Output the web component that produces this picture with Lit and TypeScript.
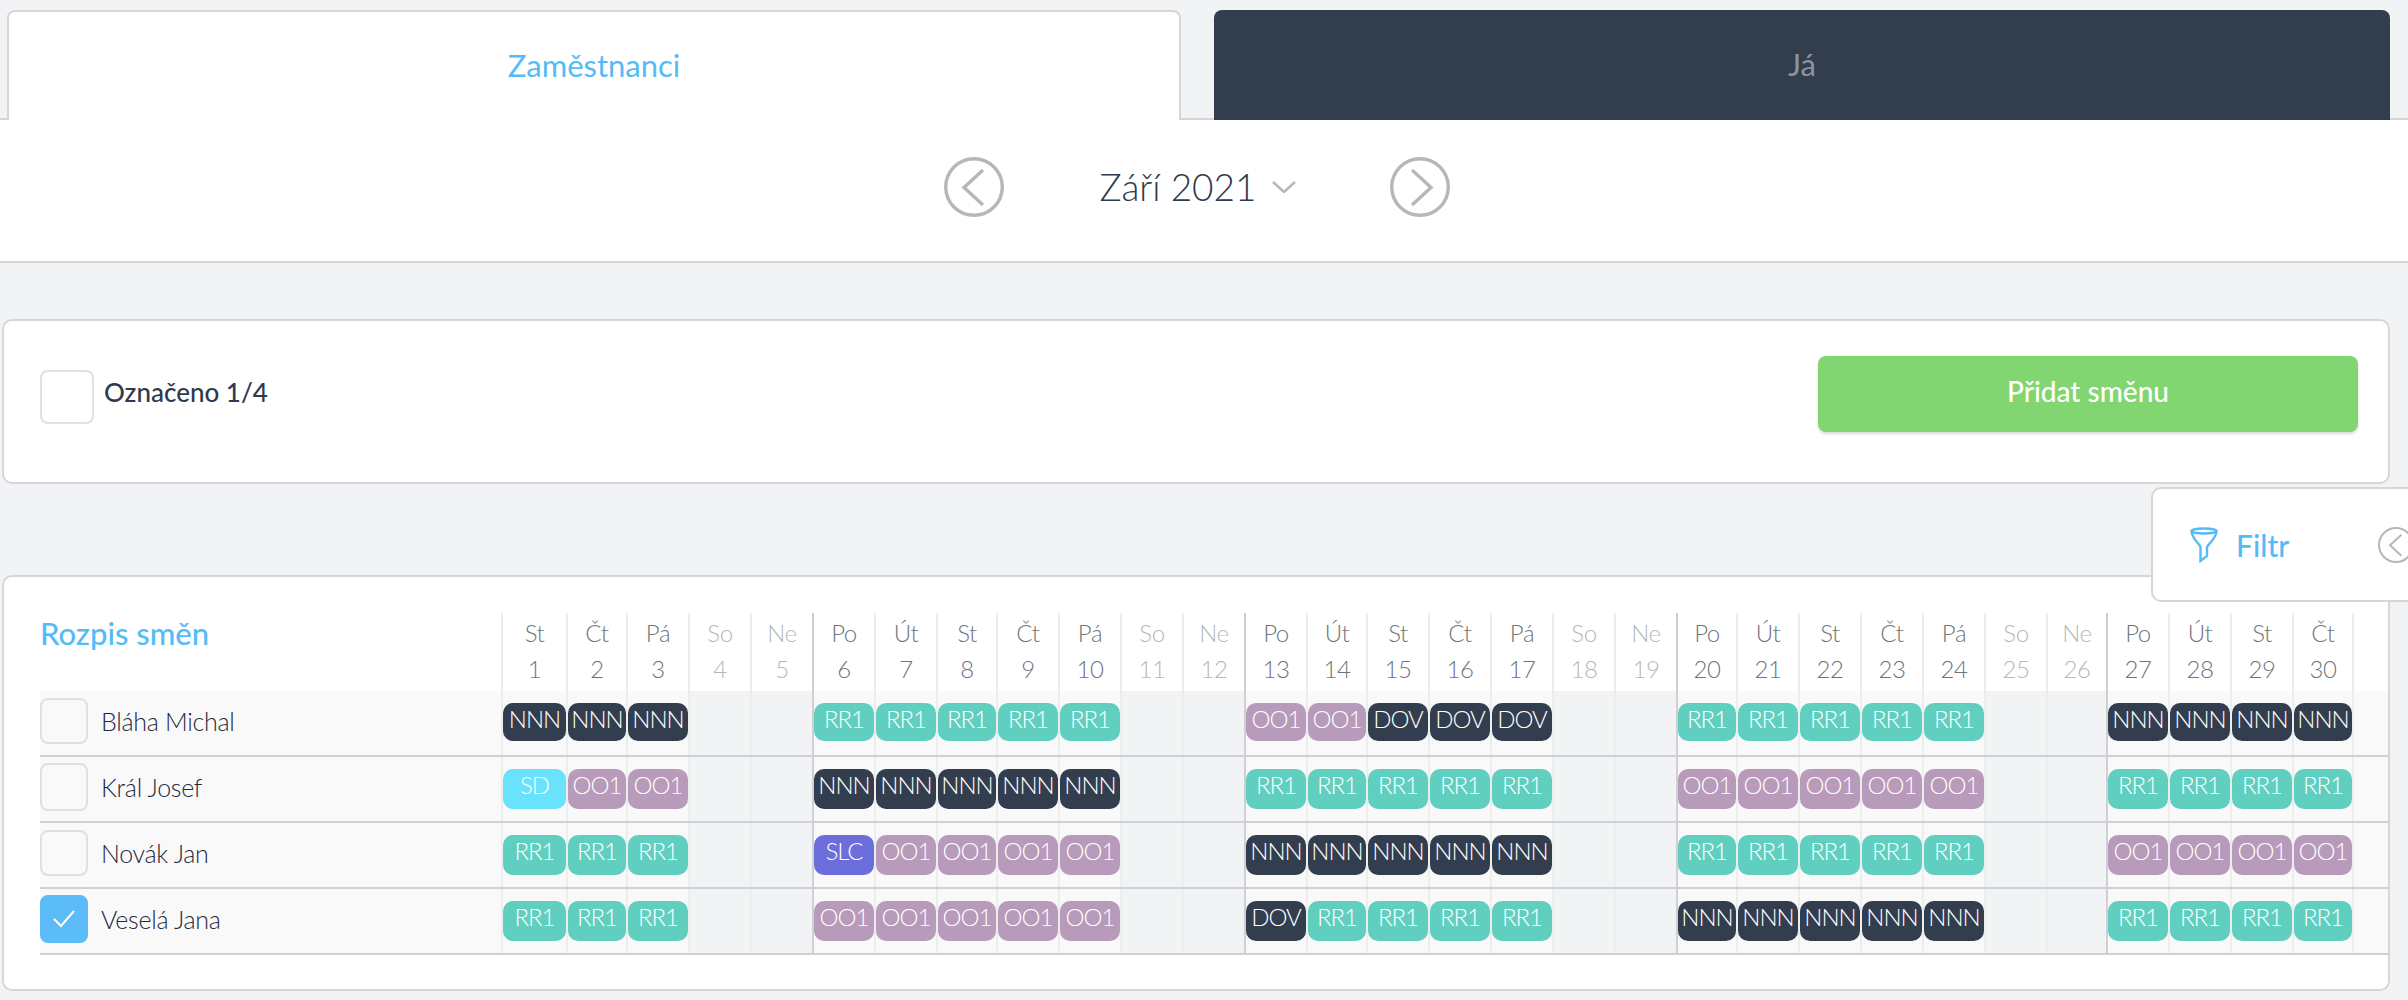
import { LitElement, css, html, svg } from 'lit';
import { customElement } from 'lit/decorators.js';

const days = ['St', 'Čt', 'Pá', 'So', 'Ne', 'Po', 'Út'];

// day columns are not equal in the original table, widths come from content
const colWidths = [65, 60, 62, 62, 62, 62, 62, 60, 62, 62, 62, 62, 62, 60, 62, 62, 62, 62, 62, 60, 62, 62, 62, 62, 62, 60, 62, 62, 62, 62];

type Shift = { from: number; to: number; code: string };

const employees: { name: string; checked?: boolean; shifts: Shift[] }[] = [
    {
        name: 'Bláha Michal',
        shifts: [
            { from: 1, to: 3, code: 'NNN' },
            { from: 6, to: 10, code: 'RR1' },
            { from: 13, to: 14, code: 'OO1' },
            { from: 15, to: 17, code: 'DOV' },
            { from: 20, to: 24, code: 'RR1' },
            { from: 27, to: 30, code: 'NNN' },
        ],
    },
    {
        name: 'Král Josef',
        shifts: [
            { from: 1, to: 1, code: 'SD' },
            { from: 2, to: 3, code: 'OO1' },
            { from: 6, to: 10, code: 'NNN' },
            { from: 13, to: 17, code: 'RR1' },
            { from: 20, to: 24, code: 'OO1' },
            { from: 27, to: 30, code: 'RR1' },
        ],
    },
    {
        name: 'Novák Jan',
        shifts: [
            { from: 1, to: 3, code: 'RR1' },
            { from: 6, to: 6, code: 'SLC' },
            { from: 7, to: 10, code: 'OO1' },
            { from: 13, to: 17, code: 'NNN' },
            { from: 20, to: 24, code: 'RR1' },
            { from: 27, to: 30, code: 'OO1' },
        ],
    },
    {
        name: 'Veselá Jana',
        checked: true,
        shifts: [
            { from: 1, to: 3, code: 'RR1' },
            { from: 6, to: 10, code: 'OO1' },
            { from: 13, to: 13, code: 'DOV' },
            { from: 14, to: 17, code: 'RR1' },
            { from: 20, to: 24, code: 'NNN' },
            { from: 27, to: 30, code: 'RR1' },
        ],
    },
];

const dayList = Array.from({ length: 30 }, (_, i) => i + 1);
const dayName = (d: number) => days[(d - 1) % 7];
const isWeekend = (d: number) => ['So', 'Ne'].includes(dayName(d));
const isMonday = (d: number) => dayName(d) === 'Po';

const arrow = (dir: 'left' | 'right', size = 60) => html`
    <svg class="arrow" width=${size} height=${size} viewBox="0 0 60 60">
        <circle cx="30" cy="30" r="28.300" fill="none" stroke="#b4b8bd" stroke-width="3.400"></circle>
        ${dir === 'left'
            ? svg`<path d="M39 13 L20 30.500 L39 48" fill="none" stroke="#b4b8bd" stroke-width="3.400"></path>`
            : svg`<path d="M22 13 L41 30.500 L22 48" fill="none" stroke="#b4b8bd" stroke-width="3.400"></path>`}
    </svg>
`;

@customElement('app-root')
export class AppRoot extends LitElement {
    static styles = css`
        :host {
            display: block;
            position: relative;
            overflow: hidden;
            min-height: 1000px;
            background: #f2f3f5;
            font-family: 'Lato', sans-serif;
            color: #2f3a4c;
        }

        .tabs {
            display: flex;
            gap: 33px;
            height: 120px;
            padding: 10px 18px 0 7px;
            box-sizing: border-box;
            box-shadow: inset 0 -2px 0 #d5d6da;
        }

        .tab {
            box-sizing: border-box;
            display: flex;
            align-items: center;
            justify-content: center;
            padding-bottom: 3px;
            border-radius: 8px 8px 0 0;
            font-size: 31px;
        }

        .tab.active {
            width: 1174px;
            background: #fff;
            color: #55bbf8;
            border: 2px solid #d5d6da;
            border-bottom: 0;
        }

        .tab.dark {
            flex: 1;
            background: #323d4e;
            color: #8e949d;
        }

        .month {
            display: flex;
            align-items: center;
            justify-content: center;
            height: 143px;
            box-sizing: border-box;
            padding: 0 15px 8px 0;
            background: #fff;
            border-bottom: 2px solid #d5d6da;
        }

        .month-label {
            display: flex;
            align-items: center;
            gap: 15px;
            margin: 0 94px 0 96px;
            font-size: 37px;
            font-weight: 300;
        }

        .card {
            background: #fff;
            border: 2px solid #d5d6da;
            border-radius: 10px;
            margin: 0 18px 0 2px;
            box-sizing: border-box;
        }

        .toolbar {
            display: flex;
            align-items: flex-start;
            height: 165px;
            margin-top: 56px;
            padding: 35px 30px 0 36px;
        }

        .box {
            box-sizing: border-box;
            border: 2px solid #dfe0e3;
            border-radius: 8px;
            width: 48px;
            height: 46px;
            flex: none;
        }

        .box.tall {
            height: 48px;
        }

        .toolbar .box {
            width: 54px;
            height: 54px;
            margin-top: 14px;
        }

        .count {
            margin: 20px 0 0 10px;
            font-size: 26px;
            font-weight: 500;
        }

        .add {
            margin-left: auto;
            width: 540px;
            height: 76px;
            border: 0;
            border-radius: 8px;
            background: #82d672;
            color: #fff;
            font: 500 28px 'Lato', sans-serif;
            padding-bottom: 7px;
            box-shadow: 0 2px 3px rgba(0, 0, 0, 0.15);
        }

        .schedule {
            height: 416px;
            margin-top: 91px;
            padding: 36px 0 0 36px;
        }

        .line {
            display: flex;
        }

        .line-head {
            width: 461px;
            flex: none;
        }

        .title {
            font-size: 31px;
            font-weight: 500;
            color: #55bbf8;
            margin-top: 1px;
        }

        .cell {
            box-sizing: border-box;
            flex: none;
            border-left: 2px solid #eceded;
        }

        .cell.monday {
            border-left-color: #cfd0d4;
        }

        .cell.last {
            border-right: 2px solid #eceded;
        }

        .head-cell {
            height: 78px;
            text-align: center;
            font-size: 24px;
            font-weight: 300;
            letter-spacing: -0.4px;
            color: #6f747b;
            line-height: 36px;
            padding-top: 2px;
        }

        .head-cell.weekend {
            color: #b4b7bb;
        }

        .row {
            height: 66px;
            background: #f9f9fa;
            border-bottom: 2px solid #cfd0d4;
            box-sizing: border-box;
        }

        .person {
            display: flex;
            align-items: center;
            gap: 13px;
            padding-bottom: 4px;
            box-sizing: border-box;
            font-size: 25px;
            font-weight: 300;
            letter-spacing: -0.3px;
            color: #1f2a3c;
        }

        .box.checked {
            background: #5bbcf8;
            border-color: #5bbcf8;
            display: flex;
            align-items: center;
            justify-content: center;
        }

        .day {
            padding-top: 12px;
        }

        .day.weekend {
            background: #f2f3f5;
        }

        .badge {
            height: 40px;
            border-radius: 10px;
            color: #fff;
            text-align: center;
            font-size: 24px;
            font-weight: 300;
            letter-spacing: -1px;
            line-height: 32px;
        }

        .row.first .badge {
            height: 38px;
        }

        .NNN,
        .DOV {
            background: #323d4e;
        }
        .RR1 {
            background: #60cfc0;
        }
        .OO1 {
            background: #b89aba;
        }
        .SD {
            background: #69e2fb;
        }
        .SLC {
            background: #6c6edc;
        }

        .filter {
            position: absolute;
            left: 2151px;
            top: 487px;
            width: 300px;
            height: 115px;
            box-sizing: border-box;
            display: flex;
            align-items: center;
            padding: 0 0 0 37px;
            background: #fff;
            border: 2px solid #d5d6da;
            border-radius: 10px;
        }

        .filter span {
            margin: 0 89px 0 18px;
            font-size: 30px;
            font-weight: 500;
            color: #55bbf8;
        }

        .filter .arrow {
            flex: none;
        }
    `;

    private renderHead() {
        return html`
            <div class="line">
                <div class="line-head"><div class="title">Rozpis směn</div></div>
                ${dayList.map(
                    (d) => html`
                        <div
                            class="cell head-cell ${isWeekend(d) ? 'weekend' : ''} ${isMonday(d) ? 'monday' : ''} ${d === 30 ? 'last' : ''}"
                            style="width:${colWidths[d - 1]}px"
                        >
                            ${dayName(d)}<br />${d}
                        </div>
                    `,
                )}
            </div>
        `;
    }

    private renderRow(emp: (typeof employees)[number], index: number) {
        return html`
            <div class="line row ${index === 0 ? 'first' : ''}">
                <div class="line-head person">
                    <div class="box ${emp.checked ? 'checked' : ''} ${index % 2 ? 'tall' : ''}">
                        ${emp.checked
                            ? html`<svg width="24" height="20" viewBox="0 0 24 20">
                                  <path d="M2 10 L9 17 L22 2" fill="none" stroke="#fff" stroke-width="2"></path>
                              </svg>`
                            : ''}
                    </div>
                    ${emp.name}
                </div>
                ${dayList.map((d) => {
                    const shift = emp.shifts.find((s) => d >= s.from && d <= s.to);
                    return html`
                        <div
                            class="cell day ${isWeekend(d) ? 'weekend' : ''} ${isMonday(d) ? 'monday' : ''} ${d === 30 ? 'last' : ''}"
                            style="width:${colWidths[d - 1]}px"
                        >
                            ${shift ? html`<div class="badge ${shift.code}">${shift.code}</div>` : ''}
                        </div>
                    `;
                })}
            </div>
        `;
    }

    protected render() {
        return html`
            <div class="tabs">
                <div class="tab active">Zaměstnanci</div>
                <div class="tab dark">Já</div>
            </div>
            <div class="month">
                ${arrow('left')}
                <div class="month-label">
                    Září 2021
                    <svg width="24" height="12" viewBox="0 0 24 12">
                        <path d="M1 1 L12 11 L23 1" fill="none" stroke="#b4b8bd" stroke-width="2.500"></path>
                    </svg>
                </div>
                ${arrow('right')}
            </div>
            <div class="card toolbar">
                <div class="box"></div>
                <div class="count">Označeno 1/4</div>
                <button class="add">Přidat směnu</button>
            </div>
            <div class="card schedule">
                ${this.renderHead()} ${employees.map((e, i) => this.renderRow(e, i))}
            </div>
            <div class="filter">
                <svg width="28" height="36" viewBox="0 0 28 36">
                    <ellipse cx="14" cy="4" rx="12.500" ry="2.500" fill="none" stroke="#55bbf8" stroke-width="2.400"></ellipse>
                    <path
                        d="M1.500 4 C2 12 9 16 10.500 20 L10.500 34 L17 29 L17 20 C19 16 26 12 26.500 4"
                        fill="none"
                        stroke="#55bbf8"
                        stroke-width="2.400"
                    ></path>
                </svg>
                <span>Filtr</span>
                ${arrow('left', 36)}
            </div>
        `;
    }
}
